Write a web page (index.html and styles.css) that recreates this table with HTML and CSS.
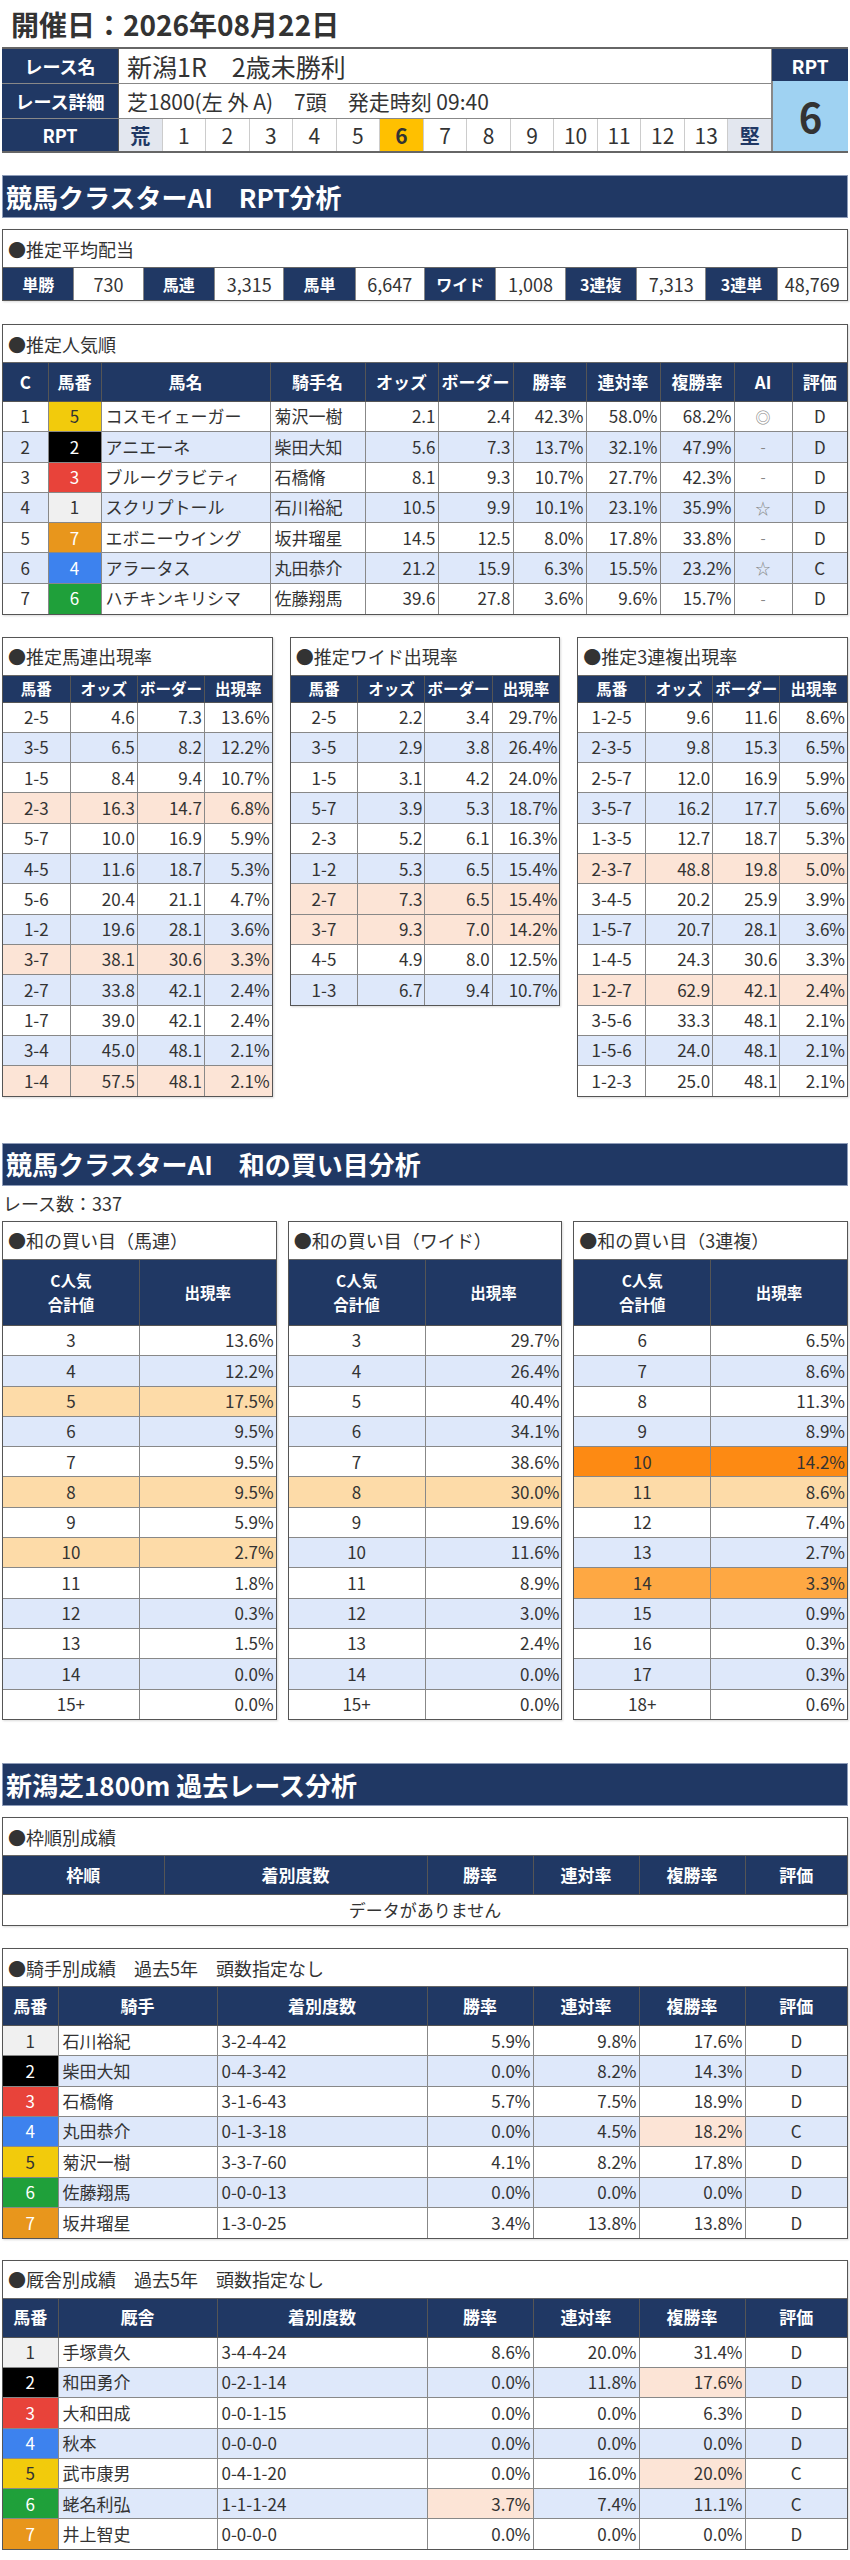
FILE: index.html
```html
<!DOCTYPE html>
<html lang="ja">
<head>
<meta charset="utf-8">
<title>開催日：2026年08月22日</title>
<link rel="stylesheet" href="styles.css">
</head>
<body>
<div class="page">
  <h1 class="title">開催日：2026年08月22日</h1>

  <div class="race">
    <div class="race-main">
      <div class="race-row r1">
        <div class="rlabel">レース名</div>
        <div class="rval big">新潟1R　2歳未勝利</div>
      </div>
      <div class="race-row r2">
        <div class="rlabel">レース詳細</div>
        <div class="rval">芝1800(左 外 A)　7頭　発走時刻 09:40</div>
      </div>
      <div class="race-row r3">
        <div class="rlabel">RPT</div>
        <div class="rpt-scale">
          <span class="end">荒</span><span>1</span><span>2</span><span>3</span><span>4</span><span>5</span><span class="cur">6</span><span>7</span><span>8</span><span>9</span><span>10</span><span>11</span><span>12</span><span>13</span><span class="end">堅</span>
        </div>
      </div>
    </div>
    <div class="race-rpt">
      <div class="rpt-head">RPT</div>
      <div class="rpt-val">6</div>
    </div>
  </div>

  <h2 class="section s1">競馬クラスターAI　RPT分析</h2>

  <div class="box payout-box">
    <div class="box-label">●推定平均配当</div>
    <div class="payout">
      <div class="pk">単勝</div><div class="pv">730</div>
      <div class="pk">馬連</div><div class="pv">3,315</div>
      <div class="pk">馬単</div><div class="pv">6,647</div>
      <div class="pk">ワイド</div><div class="pv">1,008</div>
      <div class="pk">3連複</div><div class="pv">7,313</div>
      <div class="pk">3連単</div><div class="pv">48,769</div>
    </div>
  </div>

  <div class="box pop-box">
    <div class="box-label">●推定人気順</div>
    <table class="t pop">
      <colgroup><col style="width:45px"><col style="width:53px"><col style="width:169px"><col style="width:95px"><col style="width:73px"><col style="width:75px"><col style="width:73px"><col style="width:74px"><col style="width:74px"><col style="width:58px"><col></colgroup>
      <thead><tr><th>C</th><th>馬番</th><th>馬名</th><th>騎手名</th><th>オッズ</th><th>ボーダー</th><th>勝率</th><th>連対率</th><th>複勝率</th><th>AI</th><th>評価</th></tr></thead>
      <tbody>
        <tr><td class="c">1</td><td class="c w5">5</td><td>コスモイェーガー</td><td>菊沢一樹</td><td class="r">2.1</td><td class="r">2.4</td><td class="r">42.3%</td><td class="r">58.0%</td><td class="r">68.2%</td><td class="c ai">◎</td><td class="c">D</td></tr>
        <tr class="alt"><td class="c">2</td><td class="c w2">2</td><td>アニエーネ</td><td>柴田大知</td><td class="r">5.6</td><td class="r">7.3</td><td class="r">13.7%</td><td class="r">32.1%</td><td class="r">47.9%</td><td class="c ai">-</td><td class="c">D</td></tr>
        <tr><td class="c">3</td><td class="c w3">3</td><td>ブルーグラビティ</td><td>石橋脩</td><td class="r">8.1</td><td class="r">9.3</td><td class="r">10.7%</td><td class="r">27.7%</td><td class="r">42.3%</td><td class="c ai">-</td><td class="c">D</td></tr>
        <tr class="alt"><td class="c">4</td><td class="c w1">1</td><td>スクリプトール</td><td>石川裕紀</td><td class="r">10.5</td><td class="r">9.9</td><td class="r">10.1%</td><td class="r">23.1%</td><td class="r">35.9%</td><td class="c ai">☆</td><td class="c">D</td></tr>
        <tr><td class="c">5</td><td class="c w7">7</td><td>エボニーウイング</td><td>坂井瑠星</td><td class="r">14.5</td><td class="r">12.5</td><td class="r">8.0%</td><td class="r">17.8%</td><td class="r">33.8%</td><td class="c ai">-</td><td class="c">D</td></tr>
        <tr class="alt"><td class="c">6</td><td class="c w4">4</td><td>アラータス</td><td>丸田恭介</td><td class="r">21.2</td><td class="r">15.9</td><td class="r">6.3%</td><td class="r">15.5%</td><td class="r">23.2%</td><td class="c ai">☆</td><td class="c">C</td></tr>
        <tr><td class="c">7</td><td class="c w6">6</td><td>ハチキンキリシマ</td><td>佐藤翔馬</td><td class="r">39.6</td><td class="r">27.8</td><td class="r">3.6%</td><td class="r">9.6%</td><td class="r">15.7%</td><td class="c ai">-</td><td class="c">D</td></tr>
      </tbody>
    </table>
  </div>

  <div class="three">
    <div class="box">
      <div class="box-label">●推定馬連出現率</div>
      <table class="t small">
        <thead><tr><th>馬番</th><th>オッズ</th><th>ボーダー</th><th>出現率</th></tr></thead>
        <tbody>
          <tr><td class="c">2-5</td><td class="r">4.6</td><td class="r">7.3</td><td class="r">13.6%</td></tr>
          <tr class="alt"><td class="c">3-5</td><td class="r">6.5</td><td class="r">8.2</td><td class="r">12.2%</td></tr>
          <tr><td class="c">1-5</td><td class="r">8.4</td><td class="r">9.4</td><td class="r">10.7%</td></tr>
          <tr class="hi"><td class="c">2-3</td><td class="r">16.3</td><td class="r">14.7</td><td class="r">6.8%</td></tr>
          <tr><td class="c">5-7</td><td class="r">10.0</td><td class="r">16.9</td><td class="r">5.9%</td></tr>
          <tr class="alt"><td class="c">4-5</td><td class="r">11.6</td><td class="r">18.7</td><td class="r">5.3%</td></tr>
          <tr><td class="c">5-6</td><td class="r">20.4</td><td class="r">21.1</td><td class="r">4.7%</td></tr>
          <tr class="alt"><td class="c">1-2</td><td class="r">19.6</td><td class="r">28.1</td><td class="r">3.6%</td></tr>
          <tr class="hi"><td class="c">3-7</td><td class="r">38.1</td><td class="r">30.6</td><td class="r">3.3%</td></tr>
          <tr class="alt"><td class="c">2-7</td><td class="r">33.8</td><td class="r">42.1</td><td class="r">2.4%</td></tr>
          <tr><td class="c">1-7</td><td class="r">39.0</td><td class="r">42.1</td><td class="r">2.4%</td></tr>
          <tr class="alt"><td class="c">3-4</td><td class="r">45.0</td><td class="r">48.1</td><td class="r">2.1%</td></tr>
          <tr class="hi"><td class="c">1-4</td><td class="r">57.5</td><td class="r">48.1</td><td class="r">2.1%</td></tr>
        </tbody>
      </table>
    </div>
    <div class="box">
      <div class="box-label">●推定ワイド出現率</div>
      <table class="t small">
        <thead><tr><th>馬番</th><th>オッズ</th><th>ボーダー</th><th>出現率</th></tr></thead>
        <tbody>
          <tr><td class="c">2-5</td><td class="r">2.2</td><td class="r">3.4</td><td class="r">29.7%</td></tr>
          <tr class="alt"><td class="c">3-5</td><td class="r">2.9</td><td class="r">3.8</td><td class="r">26.4%</td></tr>
          <tr><td class="c">1-5</td><td class="r">3.1</td><td class="r">4.2</td><td class="r">24.0%</td></tr>
          <tr class="alt"><td class="c">5-7</td><td class="r">3.9</td><td class="r">5.3</td><td class="r">18.7%</td></tr>
          <tr><td class="c">2-3</td><td class="r">5.2</td><td class="r">6.1</td><td class="r">16.3%</td></tr>
          <tr class="alt"><td class="c">1-2</td><td class="r">5.3</td><td class="r">6.5</td><td class="r">15.4%</td></tr>
          <tr class="hi"><td class="c">2-7</td><td class="r">7.3</td><td class="r">6.5</td><td class="r">15.4%</td></tr>
          <tr class="hi"><td class="c">3-7</td><td class="r">9.3</td><td class="r">7.0</td><td class="r">14.2%</td></tr>
          <tr><td class="c">4-5</td><td class="r">4.9</td><td class="r">8.0</td><td class="r">12.5%</td></tr>
          <tr class="alt"><td class="c">1-3</td><td class="r">6.7</td><td class="r">9.4</td><td class="r">10.7%</td></tr>
        </tbody>
      </table>
    </div>
    <div class="box">
      <div class="box-label">●推定3連複出現率</div>
      <table class="t small">
        <thead><tr><th>馬番</th><th>オッズ</th><th>ボーダー</th><th>出現率</th></tr></thead>
        <tbody>
          <tr><td class="c">1-2-5</td><td class="r">9.6</td><td class="r">11.6</td><td class="r">8.6%</td></tr>
          <tr class="alt"><td class="c">2-3-5</td><td class="r">9.8</td><td class="r">15.3</td><td class="r">6.5%</td></tr>
          <tr><td class="c">2-5-7</td><td class="r">12.0</td><td class="r">16.9</td><td class="r">5.9%</td></tr>
          <tr class="alt"><td class="c">3-5-7</td><td class="r">16.2</td><td class="r">17.7</td><td class="r">5.6%</td></tr>
          <tr><td class="c">1-3-5</td><td class="r">12.7</td><td class="r">18.7</td><td class="r">5.3%</td></tr>
          <tr class="hi"><td class="c">2-3-7</td><td class="r">48.8</td><td class="r">19.8</td><td class="r">5.0%</td></tr>
          <tr><td class="c">3-4-5</td><td class="r">20.2</td><td class="r">25.9</td><td class="r">3.9%</td></tr>
          <tr class="alt"><td class="c">1-5-7</td><td class="r">20.7</td><td class="r">28.1</td><td class="r">3.6%</td></tr>
          <tr><td class="c">1-4-5</td><td class="r">24.3</td><td class="r">30.6</td><td class="r">3.3%</td></tr>
          <tr class="hi"><td class="c">1-2-7</td><td class="r">62.9</td><td class="r">42.1</td><td class="r">2.4%</td></tr>
          <tr><td class="c">3-5-6</td><td class="r">33.3</td><td class="r">48.1</td><td class="r">2.1%</td></tr>
          <tr class="alt"><td class="c">1-5-6</td><td class="r">24.0</td><td class="r">48.1</td><td class="r">2.1%</td></tr>
          <tr><td class="c">1-2-3</td><td class="r">25.0</td><td class="r">48.1</td><td class="r">2.1%</td></tr>
        </tbody>
      </table>
    </div>
  </div>

  <h2 class="section s2">競馬クラスターAI　和の買い目分析</h2>
  <div class="count">レース数：337</div>

  <div class="three sums">
    <div class="box">
      <div class="box-label">●和の買い目（馬連）</div>
      <table class="t sum">
        <thead><tr><th>C人気<br>合計値</th><th>出現率</th></tr></thead>
        <tbody>
          <tr><td class="c">3</td><td class="r">13.6%</td></tr>
          <tr class="alt"><td class="c">4</td><td class="r">12.2%</td></tr>
          <tr class="o1"><td class="c">5</td><td class="r">17.5%</td></tr>
          <tr class="alt"><td class="c">6</td><td class="r">9.5%</td></tr>
          <tr><td class="c">7</td><td class="r">9.5%</td></tr>
          <tr class="o1"><td class="c">8</td><td class="r">9.5%</td></tr>
          <tr><td class="c">9</td><td class="r">5.9%</td></tr>
          <tr class="o1"><td class="c">10</td><td class="r">2.7%</td></tr>
          <tr><td class="c">11</td><td class="r">1.8%</td></tr>
          <tr class="alt"><td class="c">12</td><td class="r">0.3%</td></tr>
          <tr><td class="c">13</td><td class="r">1.5%</td></tr>
          <tr class="alt"><td class="c">14</td><td class="r">0.0%</td></tr>
          <tr><td class="c">15+</td><td class="r">0.0%</td></tr>
        </tbody>
      </table>
    </div>
    <div class="box">
      <div class="box-label">●和の買い目（ワイド）</div>
      <table class="t sum">
        <thead><tr><th>C人気<br>合計値</th><th>出現率</th></tr></thead>
        <tbody>
          <tr><td class="c">3</td><td class="r">29.7%</td></tr>
          <tr class="alt"><td class="c">4</td><td class="r">26.4%</td></tr>
          <tr><td class="c">5</td><td class="r">40.4%</td></tr>
          <tr class="alt"><td class="c">6</td><td class="r">34.1%</td></tr>
          <tr><td class="c">7</td><td class="r">38.6%</td></tr>
          <tr class="o1"><td class="c">8</td><td class="r">30.0%</td></tr>
          <tr><td class="c">9</td><td class="r">19.6%</td></tr>
          <tr class="alt"><td class="c">10</td><td class="r">11.6%</td></tr>
          <tr><td class="c">11</td><td class="r">8.9%</td></tr>
          <tr class="alt"><td class="c">12</td><td class="r">3.0%</td></tr>
          <tr><td class="c">13</td><td class="r">2.4%</td></tr>
          <tr class="alt"><td class="c">14</td><td class="r">0.0%</td></tr>
          <tr><td class="c">15+</td><td class="r">0.0%</td></tr>
        </tbody>
      </table>
    </div>
    <div class="box">
      <div class="box-label">●和の買い目（3連複）</div>
      <table class="t sum">
        <thead><tr><th>C人気<br>合計値</th><th>出現率</th></tr></thead>
        <tbody>
          <tr><td class="c">6</td><td class="r">6.5%</td></tr>
          <tr class="alt"><td class="c">7</td><td class="r">8.6%</td></tr>
          <tr><td class="c">8</td><td class="r">11.3%</td></tr>
          <tr class="alt"><td class="c">9</td><td class="r">8.9%</td></tr>
          <tr class="o3"><td class="c">10</td><td class="r">14.2%</td></tr>
          <tr class="o1"><td class="c">11</td><td class="r">8.6%</td></tr>
          <tr><td class="c">12</td><td class="r">7.4%</td></tr>
          <tr class="alt"><td class="c">13</td><td class="r">2.7%</td></tr>
          <tr class="o2"><td class="c">14</td><td class="r">3.3%</td></tr>
          <tr class="alt"><td class="c">15</td><td class="r">0.9%</td></tr>
          <tr><td class="c">16</td><td class="r">0.3%</td></tr>
          <tr class="alt"><td class="c">17</td><td class="r">0.3%</td></tr>
          <tr><td class="c">18+</td><td class="r">0.6%</td></tr>
        </tbody>
      </table>
    </div>
  </div>

  <h2 class="section s3">新潟芝1800m 過去レース分析</h2>

  <div class="box frame-box">
    <div class="box-label">●枠順別成績</div>
    <table class="t past">
      <colgroup><col style="width:161px"><col style="width:263px"><col style="width:106px"><col style="width:106px"><col style="width:106px"><col></colgroup>
      <thead><tr><th>枠順</th><th>着別度数</th><th>勝率</th><th>連対率</th><th>複勝率</th><th>評価</th></tr></thead>
      <tbody><tr><td class="c" colspan="6">データがありません</td></tr></tbody>
    </table>
  </div>

  <div class="box jockey-box">
    <div class="box-label">●騎手別成績　過去5年　頭数指定なし</div>
    <table class="t past">
      <colgroup><col style="width:55px"><col style="width:159px"><col style="width:210px"><col style="width:106px"><col style="width:106px"><col style="width:106px"><col></colgroup>
      <thead><tr><th>馬番</th><th>騎手</th><th>着別度数</th><th>勝率</th><th>連対率</th><th>複勝率</th><th>評価</th></tr></thead>
      <tbody>
        <tr><td class="c w1">1</td><td>石川裕紀</td><td>3-2-4-42</td><td class="r">5.9%</td><td class="r">9.8%</td><td class="r">17.6%</td><td class="c">D</td></tr>
        <tr class="alt"><td class="c w2">2</td><td>柴田大知</td><td>0-4-3-42</td><td class="r">0.0%</td><td class="r">8.2%</td><td class="r">14.3%</td><td class="c">D</td></tr>
        <tr><td class="c w3">3</td><td>石橋脩</td><td>3-1-6-43</td><td class="r">5.7%</td><td class="r">7.5%</td><td class="r">18.9%</td><td class="c">D</td></tr>
        <tr class="alt"><td class="c w4">4</td><td>丸田恭介</td><td>0-1-3-18</td><td class="r">0.0%</td><td class="r">4.5%</td><td class="r sal">18.2%</td><td class="c">C</td></tr>
        <tr><td class="c w5">5</td><td>菊沢一樹</td><td>3-3-7-60</td><td class="r">4.1%</td><td class="r">8.2%</td><td class="r">17.8%</td><td class="c">D</td></tr>
        <tr class="alt"><td class="c w6">6</td><td>佐藤翔馬</td><td>0-0-0-13</td><td class="r">0.0%</td><td class="r">0.0%</td><td class="r">0.0%</td><td class="c">D</td></tr>
        <tr><td class="c w7">7</td><td>坂井瑠星</td><td>1-3-0-25</td><td class="r">3.4%</td><td class="r">13.8%</td><td class="r">13.8%</td><td class="c">D</td></tr>
      </tbody>
    </table>
  </div>

  <div class="box stable-box">
    <div class="box-label">●厩舎別成績　過去5年　頭数指定なし</div>
    <table class="t past">
      <colgroup><col style="width:55px"><col style="width:159px"><col style="width:210px"><col style="width:106px"><col style="width:106px"><col style="width:106px"><col></colgroup>
      <thead><tr><th>馬番</th><th>厩舎</th><th>着別度数</th><th>勝率</th><th>連対率</th><th>複勝率</th><th>評価</th></tr></thead>
      <tbody>
        <tr><td class="c w1">1</td><td>手塚貴久</td><td>3-4-4-24</td><td class="r">8.6%</td><td class="r">20.0%</td><td class="r">31.4%</td><td class="c">D</td></tr>
        <tr class="alt"><td class="c w2">2</td><td>和田勇介</td><td>0-2-1-14</td><td class="r">0.0%</td><td class="r">11.8%</td><td class="r sal">17.6%</td><td class="c">D</td></tr>
        <tr><td class="c w3">3</td><td>大和田成</td><td>0-0-1-15</td><td class="r">0.0%</td><td class="r">0.0%</td><td class="r">6.3%</td><td class="c">D</td></tr>
        <tr class="alt"><td class="c w4">4</td><td>秋本</td><td>0-0-0-0</td><td class="r">0.0%</td><td class="r">0.0%</td><td class="r">0.0%</td><td class="c">D</td></tr>
        <tr><td class="c w5">5</td><td>武市康男</td><td>0-4-1-20</td><td class="r">0.0%</td><td class="r">16.0%</td><td class="r sal">20.0%</td><td class="c">C</td></tr>
        <tr class="alt"><td class="c w6">6</td><td>蛯名利弘</td><td>1-1-1-24</td><td class="r sal">3.7%</td><td class="r">7.4%</td><td class="r">11.1%</td><td class="c">C</td></tr>
        <tr><td class="c w7">7</td><td>井上智史</td><td>0-0-0-0</td><td class="r">0.0%</td><td class="r">0.0%</td><td class="r">0.0%</td><td class="c">D</td></tr>
      </tbody>
    </table>
  </div>
</div>
</body>
</html>
```

FILE: styles.css
```css
* { box-sizing: border-box; }
body {
  margin: 0;
  background: #fff;
  color: #333;
  font-family: "Noto Sans CJK JP", "Noto Sans", "Liberation Sans", sans-serif;
}
.page { padding: 0 2px; width: 850px; }

.title {
  margin: 0;
  height: 47px;
  display: flex;
  align-items: center;
  padding-left: 9px;
  font-size: 28px;
  font-weight: bold;
  color: #333;
  line-height: 1;
}

/* race header */
.race {
  display: flex;
  border-top: 2px solid #666;
  border-bottom: 2px solid #666;
  height: 106px;
}
.race-main { flex: 1; display: flex; flex-direction: column; }
.race-row { display: flex; height: 35px; border-bottom: 1px solid #888; }
.race-row.r3 { border-bottom: 0; flex: 1; }
.rlabel {
  width: 117px;
  background: #203864;
  color: #fff;
  font-weight: bold;
  font-size: 18px;
  display: flex;
  align-items: center;
  justify-content: center;
  border-right: 1px solid #555;
}
.rval {
  flex: 1;
  display: flex;
  align-items: center;
  padding-left: 8px;
  font-size: 21px;
  color: #333;
  border-right: 1px solid #888;
}
.rval.big { font-size: 25px; }
.rpt-scale { flex: 1; display: flex; border-right: 1px solid #888; }
.rpt-scale span {
  flex: 1;
  display: flex;
  align-items: center;
  justify-content: center;
  font-size: 21px;
  border-right: 1px solid #ccc;
  color: #333;
}
.rpt-scale span:last-child { border-right: 0; }
.rpt-scale .end { background: #e3e7ef; color: #203864; font-weight: bold; font-size: 20px; }
.rpt-scale .cur { background: #ffc000; font-weight: bold; }
.race-rpt { width: 76px; display: flex; flex-direction: column; }
.rpt-head {
  height: 32px;
  background: #203864;
  color: #fff;
  font-weight: bold;
  font-size: 19px;
  display: flex;
  align-items: center;
  justify-content: center;
}
.rpt-val {
  flex: 1;
  background: #9fd2f2;
  display: flex;
  align-items: center;
  justify-content: center;
  font-size: 40px;
  font-weight: bold;
  color: #333;
  border-left: 1px solid #888;
}

/* section headers */
.section {
  margin: 0;
  height: 43px;
  background: #203864;
  color: #fff;
  font-size: 26px;
  font-weight: bold;
  display: flex;
  align-items: center;
  padding-left: 3px;
  border: 1px solid #8e9cb8;
  line-height: 1;
}
.s1 { margin-top: 22px; }
.s2 { margin-top: 46px; }
.s3 { margin-top: 43px; }

/* boxes */
.box {
  border: 1px solid #555;
  box-shadow: 1px 1px 2px rgba(0,0,0,0.15);
  background: #fff;
}
.box-label {
  height: 38px;
  display: flex;
  align-items: center;
  padding-left: 5px;
  font-size: 18px;
  color: #333;
  border-bottom: 1px solid #666;
}
.payout-box { margin-top: 11px; }
.payout { display: grid; grid-template-columns: repeat(12, 1fr); height: 32px; }
.pk {
  background: #203864;
  color: #fff;
  font-weight: bold;
  font-size: 16px;
  display: flex;
  align-items: center;
  justify-content: center;
}
.pv {
  font-size: 18px;
  display: flex;
  align-items: center;
  justify-content: center;
  border-left: 1px solid #888;
  border-right: 1px solid #888;
}
.pv:last-child { border-right: 0; }

.pop-box { margin-top: 23px; }

/* tables */
.t {
  width: 100%;
  border-collapse: collapse;
  table-layout: fixed;
}
.t th {
  background: #203864;
  color: #fff;
  font-weight: bold;
  font-size: 17px;
  height: 38.5px;
  padding: 0;
  border: 1px solid #555;
  text-align: center;
  line-height: 1.2;
  white-space: nowrap;
}
.t td {
  height: 30.3px;
  padding: 0 2px 0 4px;
  border: 1px solid #888;
  font-size: 17px;
  line-height: 1.2;
  color: #333;
  white-space: nowrap;
  background: #fff;
}
.t tr:first-child th { border-top: 0; }
.t th:first-child, .t td:first-child { border-left: 0; }
.t th:last-child, .t td:last-child { border-right: 0; }
.t tbody tr:last-child td { border-bottom: 0; }
.t td.c { text-align: center; padding: 0; }
.t td.r { text-align: right; padding: 0 2px 0 0; }
.t tr.alt td { background: #dee8fa; }
.t tr.hi td { background: #fce4d6; }
.t tr.o1 td { background: #fddba8; }
.t tr.o2 td { background: #fea843; }
.t tr.o3 td { background: #fd8a13; }
.t td.sal { background: #fce4d6 !important; }
.t td.ai { color: #888; font-size: 15px; }

/* waku colors */
.t td.w1 { background: #f0f0f0 !important; color: #333; }
.t td.w2 { background: #000 !important; color: #fff; }
.t td.w3 { background: #e8433a !important; color: #fff; }
.t td.w4 { background: #3d82ee !important; color: #fff; }
.t td.w5 { background: #f2cb0c !important; color: #333; }
.t td.w6 { background: #1fa03a !important; color: #fff; }
.t td.w7 { background: #e8961c !important; color: #fff; }

.three {
  display: flex;
  gap: 17px;
  margin-top: 22px;
  align-items: flex-start;
}
.three > .box { flex: 1; min-width: 0; }
.small th { height: 26.5px; font-size: 15.5px; }

.count {
  height: 35px;
  display: flex;
  align-items: center;
  font-size: 18px;
  color: #333;
  padding-left: 1px;
}
.sums { gap: 11px; margin-top: 0; }
.sum th { height: 65.5px; font-size: 15.5px; line-height: 1.6; }

.past th { height: 38.5px; }
.frame-box { margin-top: 11px; }
.jockey-box { margin-top: 22px; }
.stable-box { margin-top: 21px; }
.past td:nth-child(2), .past td:nth-child(3) { padding-left: 4px; }
```
